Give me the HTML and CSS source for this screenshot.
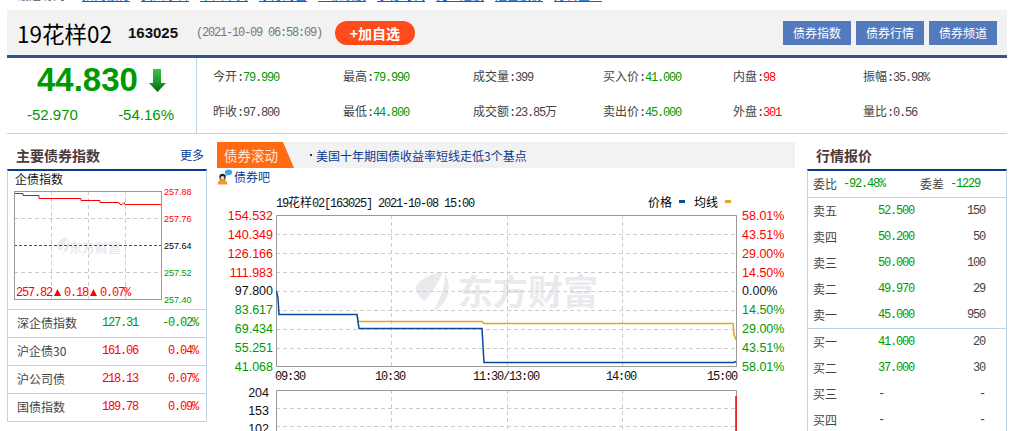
FILE: index.html
```html
<!DOCTYPE html>
<html lang="zh-CN">
<head>
  <meta charset="UTF-8" />
  <title>19花样02 163025 行情</title>
  <link rel="stylesheet" href="styles.css">
</head>
<body>
  <div class="page">
    <div class="recent">
      <span class="recent-label">最近访问：</span>
      <a href="#">招商银行</a><a href="#">贵州茅台</a><a href="#">中国平安</a><a href="#">东方财富</a><a href="#">五粮液股</a><a href="#">宁德时代</a><a href="#">比亚迪股</a><a href="#">隆基股份</a><a href="#">万科企业</a>
    </div>

    <div class="head">
      <h1>19花样02</h1>
      <span class="code">163025</span>
      <span class="time mono">(2021-10-09 06:58:09)</span>
      <button class="add-btn">+加自选</button>
      <div class="head-links">
        <a href="#">债券指数</a>
        <a href="#">债券行情</a>
        <a href="#">债券频道</a>
      </div>
    </div>

    <div class="quote">
      <div class="price-box">
        <div class="price-now">
          <span>44.830</span>
          <svg class="arrow" width="17" height="23" viewBox="0 0 17 23">
            <defs>
              <linearGradient id="arrowFill" x1="0" y1="0" x2="0" y2="1">
                <stop offset="0" stop-color="#3cc04a" />
                <stop offset="0.55" stop-color="#1f9a2a" />
                <stop offset="1" stop-color="#0b5f10" />
              </linearGradient>
            </defs>
            <path d="M4 0H12V14H17L8.5 23L0 14H4Z" fill="url(#arrowFill)" />
          </svg>
        </div>
        <div class="price-change">
          <span>-52.970</span>
          <span>-54.16%</span>
        </div>
      </div>
      <div class="stats">
        <div>今开<span class="mono">:</span><span class="mono green">79.990</span></div>
        <div>最高<span class="mono">:</span><span class="mono green">79.990</span></div>
        <div>成交量<span class="mono">:399</span></div>
        <div>买入价<span class="mono">:</span><span class="mono green">41.000</span></div>
        <div>内盘<span class="mono">:</span><span class="mono red">98</span></div>
        <div>振幅<span class="mono">:35.98%</span></div>
        <div>昨收<span class="mono">:97.800</span></div>
        <div>最低<span class="mono">:</span><span class="mono green">44.800</span></div>
        <div>成交额<span class="mono">:23.85</span>万</div>
        <div>卖出价<span class="mono">:</span><span class="mono green">45.000</span></div>
        <div>外盘<span class="mono">:</span><span class="mono red">301</span></div>
        <div>量比<span class="mono">:0.56</span></div>
      </div>
    </div>

    <div class="columns">
      <div class="side">
        <div class="side-title">
          <h3>主要债券指数</h3>
          <a href="#">更多</a>
        </div>
        <div class="side-box">
          <div class="mini-name">企债指数</div>
          <svg class="mini-chart" width="198" height="123" viewBox="8 186 198 123">
            <g class="grid">
              <path d="M51.5 191V299M88.5 191V299M125.5 191V299M14 218.5H161M14 272.5H161" />
            </g>
            <g class="mark">
              <path d="M67 237C62 238 58 241 57 245C57 248 59 250 61 251C64 247 66 242 67 237ZM68 238C70 242 70 246 68 249C66 252 64 253 62 254C65 249 68 244 68 238Z" />
              <text x="69" y="252" class="mark-small">东方财富</text>
            </g>
            <path class="mid-red" d="M14 245.5H161" />
            <rect class="frame" x="14.5" y="191.5" width="147" height="108" />
            <path class="line-red" d="M15 193.5H23V195.5H39V198.5H81V200.5H100V202.5H119L120 204.5H122L124 202.5L125 204.5H161" />
            <g class="mini-labels">
              <text x="164" y="195" fill="#f00">257.88</text>
              <text x="164" y="222" fill="#f00">257.76</text>
              <text x="164" y="249" fill="#000">257.64</text>
              <text x="164" y="276" fill="#090">257.52</text>
              <text x="164" y="303" fill="#090">257.40</text>
            </g>
            <text class="mini-now" x="16" y="296">257.82</text>
            <path d="M54 296L57.500 289L61 296Z" fill="#f00" />
            <text class="mini-now" x="64" y="296">0.18</text>
            <path d="M90 296L93.500 289L97 296Z" fill="#f00" />
            <text class="mini-now" x="100" y="296">0.07%</text>
          </svg>
          <div class="index-row">
            <span class="index-name">深企债指数</span>
            <span class="mono green index-val">127.31</span>
            <span class="mono green index-pct">-0.02%</span>
          </div>
          <div class="index-row">
            <span class="index-name">沪企债30</span>
            <span class="mono red index-val">161.06</span>
            <span class="mono red index-pct">0.04%</span>
          </div>
          <div class="index-row">
            <span class="index-name">沪公司债</span>
            <span class="mono red index-val">218.13</span>
            <span class="mono red index-pct">0.07%</span>
          </div>
          <div class="index-row">
            <span class="index-name">国债指数</span>
            <span class="mono red index-val">189.78</span>
            <span class="mono red index-pct">0.09%</span>
          </div>
        </div>
      </div>

      <div class="center">
        <div class="news-bar">
          <span class="news-tag">债券滚动</span>
          <i class="news-dot"></i>
          <a class="news-link" href="#">美国十年期国债收益率短线走低3个基点</a>
        </div>
        <div class="guba">
          <svg width="16" height="16" viewBox="0 0 16 16">
            <ellipse cx="11.500" cy="3.200" rx="3.600" ry="2.800" fill="#3aa6ea" />
            <path d="M9 5.500L8 7.500L11 6Z" fill="#3aa6ea" />
            <path d="M0.500 15.500C1 11.500 3 10.500 5.500 10.500S10 11.500 10.500 15.500Z" fill="#f39a2e" />
            <circle cx="5.500" cy="8" r="3.200" fill="#222" />
            <circle cx="5.500" cy="9" r="2" fill="#f8d8b4" />
          </svg>
          <a href="#">债券吧</a>
        </div>
        <svg class="trend" width="578" height="246" viewBox="217 185 578 246">
          <text class="mono-text" x="276" y="207">19<tspan class="cjk">花样</tspan>02[163025] 2021-10-08 15:00</text>
          <text class="cjk" x="648" y="207" fill="#000">价格</text>
          <rect x="679" y="200" width="6" height="3" fill="#0a4a9e" />
          <text class="cjk" x="694" y="207" fill="#000">均线</text>
          <rect x="725" y="200" width="6" height="3" fill="#e0a81c" />

          <g class="mark">
            <path d="M443 272C430 274 417 280 416 288C416 294 421 299 425 301C432 292 439 282 443 272Z" />
            <path d="M445 273C450 282 450 292 446 299C442 305 438 309 433 311C440 300 445 287 445 273Z" />
            <text x="458" y="305" class="mark-big">东方财富</text>
          </g>

          <g class="grid">
            <path d="M276 234.500H737M276 253.500H737M276 272.500H737M276 291.500H737M276 310.500H737M276 329.500H737M276 348.500H737" />
            <path d="M391.500 215V366M507.500 215V366M622.500 215V366" />
            <path d="M276 408.500H737M276 426.500H737M391.500 390V431M507.500 390V431M622.500 390V431" />
          </g>
          <path class="frame" d="M276.500 366V215.500H736.500V366.500H276" />
          <path class="frame" d="M276.500 431V390.500H736.500V431" />

          <path class="line-avg" d="M357 314L358 321.500H482L484 323.500H733L734 334L736 340" />
          <path class="line-price" d="M276.500 291L278 298L279 314.500H357L359 328.500H482L484 362.500H734L736 361.500" />
          <path d="M736 396V431" stroke="#f00" stroke-width="1.500" />

          <g class="axis" text-anchor="end">
            <text x="273" y="220" fill="#f00">154.532</text>
            <text x="273" y="239" fill="#f00">140.349</text>
            <text x="273" y="258" fill="#f00">126.166</text>
            <text x="273" y="277" fill="#f00">111.983</text>
            <text x="273" y="295" fill="#111">97.800</text>
            <text x="273" y="314" fill="#090">83.617</text>
            <text x="273" y="333" fill="#090">69.434</text>
            <text x="273" y="352" fill="#090">55.251</text>
            <text x="273" y="371" fill="#090">41.068</text>
            <text x="269" y="397" fill="#111">204</text>
            <text x="269" y="415" fill="#111">153</text>
            <text x="269" y="433" fill="#111">102</text>
          </g>
          <g class="axis">
            <text x="742" y="220" fill="#f00">58.01%</text>
            <text x="742" y="239" fill="#f00">43.51%</text>
            <text x="742" y="258" fill="#f00">29.00%</text>
            <text x="742" y="277" fill="#f00">14.50%</text>
            <text x="742" y="295" fill="#111">0.00%</text>
            <text x="742" y="314" fill="#090">14.50%</text>
            <text x="742" y="333" fill="#090">29.00%</text>
            <text x="742" y="352" fill="#090">43.51%</text>
            <text x="742" y="371" fill="#090">58.01%</text>
          </g>
          <g class="mono-text" text-anchor="middle">
            <text x="290" y="380">09:30</text>
            <text x="390" y="380">10:30</text>
            <text x="506" y="380">11:30/13:00</text>
            <text x="621" y="380">14:00</text>
            <text x="722" y="380">15:00</text>
          </g>
        </svg>
      </div>

      <div class="side">
        <div class="side-title">
          <h3>行情报价</h3>
        </div>
        <div class="side-box">
          <div class="ratio">
            <span>委比</span><span class="mono green ratio-val">-92.48%</span>
            <span class="ratio-second">委差</span><span class="mono green ratio-val">-1229</span>
          </div>
          <div class="book">
            <div class="book-row"><span>卖五</span><span class="mono green">52.500</span><span class="mono book-vol">150</span></div>
            <div class="book-row"><span>卖四</span><span class="mono green">50.200</span><span class="mono book-vol">50</span></div>
            <div class="book-row"><span>卖三</span><span class="mono green">50.000</span><span class="mono book-vol">100</span></div>
            <div class="book-row"><span>卖二</span><span class="mono green">49.970</span><span class="mono book-vol">29</span></div>
            <div class="book-row"><span>卖一</span><span class="mono green">45.000</span><span class="mono book-vol">950</span></div>
          </div>
          <div class="book">
            <div class="book-row"><span>买一</span><span class="mono green">41.000</span><span class="mono book-vol">20</span></div>
            <div class="book-row"><span>买二</span><span class="mono green">37.000</span><span class="mono book-vol">30</span></div>
            <div class="book-row"><span>买三</span><span class="mono">-</span><span class="mono book-vol">-</span></div>
            <div class="book-row"><span>买四</span><span class="mono">-</span><span class="mono book-vol">-</span></div>
          </div>
        </div>
      </div>
    </div>
  </div>
</body>
</html>
```

FILE: styles.css
```css
:root {
  --cjk: "Noto Sans CJK SC", "Liberation Sans", sans-serif;
  --num: "Liberation Mono", "Noto Sans CJK SC", monospace;
  --navy: #2f5590;
  --line: #bcd3e8;
  --link: #0a3a8f;
}

html, body {
  margin: 0;
  padding: 0;
  height: 100%;
  overflow: hidden;
  background: #fff;
}

body {
  font-family: var(--cjk);
  font-size: 12px;
  color: #444;
}

a {
  text-decoration: none;
}

h1, h3 {
  margin: 0;
}

.page {
  width: 1000px;
  margin-left: 7px;
}

.mono {
  font-family: var(--num);
  font-size: 12px;
  letter-spacing: -1.2px;
}

.green { color: #090; }
.red { color: #f00; }

/* only the bottom of this row is on screen */
.recent {
  height: 10px;
  overflow: hidden;
  display: flex;
  padding-left: 10px;
}

.recent-label {
  width: 65px;
  line-height: 16px;
  margin-top: -13px;
  color: #555;
}

.recent a {
  width: 48px;
  margin-right: 11px;
  height: 16px;
  line-height: 16px;
  margin-top: -13px;
  color: #06c;
  text-decoration: underline;
}

.head {
  height: 45px;
  background: #f2f2f2;
  border-bottom: 3px solid var(--navy);
  display: flex;
  align-items: center;
  padding: 0 10px;
}

.head h1 {
  font-size: 22.500px;
  font-weight: normal;
  color: #000;
  width: 111px;
}

.code {
  font-family: "Liberation Sans", sans-serif;
  font-size: 15px;
  font-weight: bold;
  color: #111;
  width: 68px;
}

.time {
  color: #777;
  width: 139px;
}

.add-btn {
  width: 80px;
  height: 24px;
  padding: 0;
  border: none;
  border-radius: 12px;
  background: #ff4b1b;
  color: #fff;
  font-family: var(--cjk);
  font-size: 14px;
  font-weight: bold;
  line-height: 24px;
}

.head-links {
  margin-left: auto;
  display: flex;
  gap: 5px;
}

.head-links a {
  width: 68px;
  height: 24px;
  line-height: 24px;
  text-align: center;
  background: #527abd;
  color: #fff;
}

.quote {
  height: 75px;
  display: flex;
  border-bottom: 1px solid var(--line);
}

.price-box {
  width: 190px;
  box-sizing: border-box;
  border-right: 1px solid var(--line);
  font-family: "Liberation Sans", sans-serif;
}

.price-now {
  display: flex;
  align-items: center;
  height: 44px;
  padding: 0 0 0 30px;
  color: #090;
  font-size: 33px;
  font-weight: bold;
}

.arrow {
  margin-left: 11px;
}

.price-change {
  display: flex;
  justify-content: space-between;
  padding: 3px 22px 0 20px;
  color: #090;
  font-size: 15px;
  line-height: 20px;
}

.stats {
  display: grid;
  grid-template-columns: repeat(6, 130px);
  grid-auto-rows: 35px;
  padding-left: 16px;
  line-height: 35px;
}

.columns {
  display: flex;
  padding-top: 8px;
}

.side {
  width: 200px;
  flex: none;
}

.side-title {
  height: 27px;
  display: flex;
  justify-content: space-between;
  align-items: center;
  padding: 0 3px 2px 9px;
  box-sizing: border-box;
}

.side-title h3 {
  font-size: 14px;
  color: #4a3a3a;
}

.side-title a {
  color: var(--link);
}

.side-box {
  border: 1px solid var(--line);
  border-top: 2px solid #0a3a8f;
}

.mini-name {
  height: 15px;
  line-height: 15px;
  padding-left: 7px;
  color: #111;
}

.mini-chart {
  display: block;
}

.index-row {
  height: 28px;
  line-height: 26px;
  box-sizing: border-box;
  border-top: 1px solid var(--line);
  display: grid;
  grid-template-columns: 85px 42px 54px;
  padding-left: 9px;
}

.index-pct {
  text-align: right;
}

.center {
  width: 578px;
  margin: 0 12px 0 10px;
  flex: none;
}

.news-bar {
  height: 26px;
  background: #f2f2f2;
  display: flex;
  align-items: center;
}

.news-tag {
  width: 77px;
  height: 26px;
  line-height: 26px;
  box-sizing: border-box;
  padding-left: 7px;
  background: #ff6a13;
  color: #ffe9d6;
  font-size: 13.500px;
  clip-path: polygon(0 0, 66px 0, 77px 100%, 0 100%);
}

.news-dot {
  width: 2px;
  height: 2px;
  margin: 0 4px 0 16px;
  background: var(--link);
}

.news-link {
  color: var(--link);
}

.guba {
  height: 17px;
  display: flex;
  align-items: center;
  gap: 1px;
}

.guba a {
  color: var(--link);
}

.trend {
  display: block;
}

.grid path {
  fill: none;
  stroke: #ccc;
  stroke-dasharray: 4 3;
}

.frame {
  fill: none;
  stroke: #999;
}

.mid-red {
  fill: none;
  stroke: #f00;
  stroke-dasharray: 3 2;
}

.line-red {
  fill: none;
  stroke: #f00;
}

.line-price {
  fill: none;
  stroke: #0a4a9e;
  stroke-width: 1.500;
}

.line-avg {
  fill: none;
  stroke: #e0a81c;
  stroke-width: 1.500;
}

.mark {
  fill: #e9eaee;
}

.mark-big {
  font-family: var(--cjk);
  font-size: 35px;
  font-weight: bold;
}

.mark-small {
  font-family: var(--cjk);
  font-size: 13px;
  font-weight: bold;
}

.mini-labels {
  font-family: "Liberation Sans", sans-serif;
  font-size: 9px;
}

.mini-now {
  font-family: var(--num);
  font-size: 12px;
  letter-spacing: -1.2px;
  fill: #f00;
}

.axis {
  font-family: "Liberation Sans", sans-serif;
  font-size: 12.500px;
}

.mono-text {
  font-family: var(--num);
  font-size: 12px;
  letter-spacing: -1.2px;
  fill: #111;
}

.cjk {
  font-family: var(--cjk);
  font-size: 12px;
  letter-spacing: 0;
}

.ratio {
  height: 26px;
  line-height: 26px;
  box-sizing: border-box;
  display: flex;
  padding-left: 5px;
}

.ratio-val {
  margin-left: 6px;
  width: 42px;
}

.ratio-second {
  margin-left: 35px;
}

.book {
  border-top: 1px solid var(--line);
}

.book-row {
  height: 26px;
  line-height: 26px;
  display: grid;
  grid-template-columns: 65px 50px 57px;
  padding-left: 5px;
}

.book-vol {
  text-align: right;
}
```
